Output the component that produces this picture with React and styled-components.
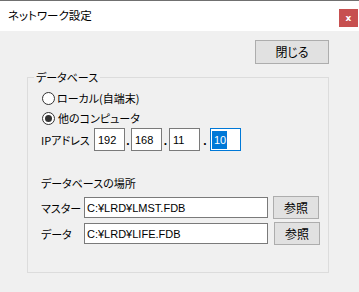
import React from "react";
import styled, { createGlobalStyle } from "styled-components";

const GlobalStyle = createGlobalStyle`
  html, body {
    margin: 0;
    padding: 0;
    background: #f0f0f0;
  }
  body {
    font-family: "Noto Sans CJK JP", "Noto Sans", sans-serif;
    font-size: 11px;
    color: #000;
    font-feature-settings: "palt";
    white-space: nowrap;
  }
`;

const Window = styled.div`
  width: 359px;
  height: 292px;
  background: #f0f0f0;
  display: flex;
  flex-direction: column;
  overflow: hidden;
`;

const TitleBar = styled.div`
  height: 30px;
  background: #fff;
  border-top: 1px solid #707070;
  display: flex;
  justify-content: space-between;
  align-items: flex-start;
  padding: 0 1px 0 8px;
`;

const Title = styled.span`
  margin-top: 6px;
  line-height: 16px;
  font-size: 11.5px;
`;

const CloseBox = styled.div`
  width: 19px;
  height: 18px;
  margin-top: 8px;
  background: #c75050;
  color: #fff;
  display: flex;
  align-items: center;
  justify-content: center;
  font: bold 9px "DejaVu Sans", sans-serif;
`;

const Body = styled.div`
  padding: 9px 30px 0 27px;
  display: flex;
  flex-direction: column;
`;

const Toolbar = styled.div`
  display: flex;
  justify-content: flex-end;
`;

const Button = styled.button`
  width: ${p => p.w || 46}px;
  height: ${p => p.h || 23}px;
  margin: 0 0 0 ${p => p.ml || 0}px;
  padding: 0;
  flex-shrink: 0;
  background: #e1e1e1;
  border: 1px solid #adadad;
  font-family: inherit;
  font-size: 12px;
  color: #000;
  line-height: 1;
  font-feature-settings: "palt";
`;

const Group = styled.fieldset`
  margin: 6px 0 0;
  padding: 0 0 27px 13px;
  border: 1px solid #dcdcdc;
  min-width: 0;
`;

const Legend = styled.legend`
  margin-left: -7px;
  padding: 0 2px;
  line-height: 14px;
  font-size: 11px;
`;

const Content = styled.div`
  padding-top: 4px;
  display: flex;
  flex-direction: column;
`;

const RadioRow = styled.label`
  height: 20px;
  display: flex;
  align-items: center;
  gap: ${p => (p.checked ? 3 : 2)}px;
`;

const RadioCircle = styled.span`
  box-sizing: border-box;
  width: 13px;
  height: 13px;
  margin-left: 1px;
  border: 1px solid #333;
  border-radius: 50%;
  background: #fff;
  display: flex;
  align-items: center;
  justify-content: center;

  &::after {
    content: "";
    width: 7px;
    height: 7px;
    border-radius: 50%;
    background: #333;
    display: ${p => (p.checked ? "block" : "none")};
  }
`;

const IpRow = styled.div`
  height: 23px;
  display: flex;
  align-items: center;
`;

const RowLabel = styled.span`
  width: ${p => p.w}px;
  flex-shrink: 0;
  white-space: nowrap;
`;

const OctetBox = styled.div`
  box-sizing: border-box;
  width: 31px;
  height: 23px;
  flex-shrink: 0;
  border: 1px solid ${p => (p.focused ? "#0078d7" : "#7a7a7a")};
  background: #fff;
  padding-left: ${p => (p.focused ? 1 : 3)}px;
  display: flex;
  align-items: center;
  font-family: "Liberation Sans", "Noto Sans", sans-serif;
  font-size: 11px;
`;

const Selected = styled.span`
  background: #0078d7;
  color: #fff;
  padding: 2px 1px 2px 2px;
  line-height: 14px;
`;

const Dot = styled.span`
  width: ${p => p.w}px;
  flex-shrink: 0;
  align-self: stretch;
  display: flex;
  align-items: flex-end;
  justify-content: center;
  font: bold 12px "Liberation Sans", sans-serif;
  line-height: 20px;
`;

const SectionLabel = styled.div`
  margin-top: 24px;
  line-height: 16px;
`;

const PathRow = styled.div`
  height: 23px;
  margin-top: ${p => p.mt}px;
  display: flex;
  align-items: center;
`;

const PathInput = styled.div`
  box-sizing: border-box;
  width: 184px;
  height: 21px;
  flex-shrink: 0;
  border: 1px solid #7a7a7a;
  background: #fff;
  padding-left: 2px;
  display: flex;
  align-items: center;
  font-family: "Liberation Sans", "Noto Sans CJK JP", sans-serif;
  font-size: 11px;
`;

const octets = [
  { v: "192", gap: 6 },
  { v: "168", gap: 7 },
  { v: "11", gap: 10 },
];

export default function App() {
  return (
    <>
      <GlobalStyle />
      <Window>
        <TitleBar>
          <Title>ネットワーク設定</Title>
          <CloseBox>x</CloseBox>
        </TitleBar>
        <Body>
          <Toolbar>
            <Button w={74} h={24}>閉じる</Button>
          </Toolbar>
          <Group>
            <Legend>データベース</Legend>
            <Content>
              <RadioRow>
                <RadioCircle />
                ローカル(自端末)
              </RadioRow>
              <RadioRow checked>
                <RadioCircle checked />
                他のコンピュータ
              </RadioRow>
              <IpRow>
                <RowLabel w={53}>IPアドレス</RowLabel>
                {octets.map(o => (
                  <React.Fragment key={o.v}>
                    <OctetBox>{o.v}</OctetBox>
                    <Dot w={o.gap}>.</Dot>
                  </React.Fragment>
                ))}
                <OctetBox focused>
                  <Selected>10</Selected>
                </OctetBox>
              </IpRow>
              <SectionLabel>データベースの場所</SectionLabel>
              <PathRow mt={5}>
                <RowLabel w={43}>マスター</RowLabel>
                <PathInput>C:¥LRD¥LMST.FDB</PathInput>
                <Button ml={5}>参照</Button>
              </PathRow>
              <PathRow mt={3}>
                <RowLabel w={43}>データ</RowLabel>
                <PathInput>C:¥LRD¥LIFE.FDB</PathInput>
                <Button ml={6}>参照</Button>
              </PathRow>
            </Content>
          </Group>
        </Body>
      </Window>
    </>
  );
}
